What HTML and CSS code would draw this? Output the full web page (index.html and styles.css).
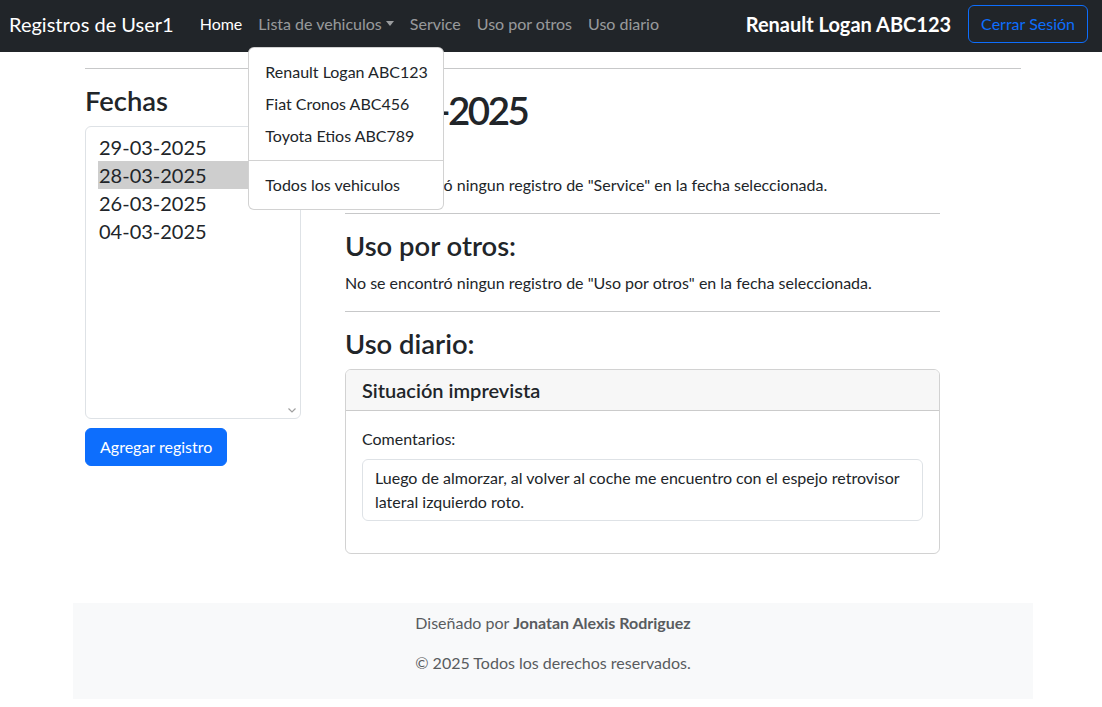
FILE: index.html
```html
<!DOCTYPE html>
<html lang="es">
<head>
<meta charset="utf-8">
<title>Registros de User1</title>
<link rel="stylesheet" href="styles.css">
</head>
<body>
<nav class="navbar">
  <div class="nav-left">
    <a class="brand" href="#">Registros de User1</a>
    <ul class="nav-links">
      <li><a class="nav-link active" href="#">Home</a></li>
      <li class="dropdown">
        <a class="nav-link dropdown-toggle" href="#">Lista de vehiculos</a>
        <ul class="dropdown-menu">
          <li><a class="dropdown-item" href="#">Renault Logan ABC123</a></li>
          <li><a class="dropdown-item" href="#">Fiat Cronos ABC456</a></li>
          <li><a class="dropdown-item" href="#">Toyota Etios ABC789</a></li>
          <li><hr class="dropdown-divider"></li>
          <li><a class="dropdown-item" href="#">Todos los vehiculos</a></li>
        </ul>
      </li>
      <li><a class="nav-link" href="#">Service</a></li>
      <li><a class="nav-link" href="#">Uso por otros</a></li>
      <li><a class="nav-link" href="#">Uso diario</a></li>
    </ul>
  </div>
  <div class="nav-right">
    <span class="current-vehicle">Renault Logan ABC123</span>
    <button class="btn-outline" type="button">Cerrar Sesión</button>
  </div>
</nav>

<main class="container">
  <hr class="rule">
  <div class="row">
    <aside class="col-left">
      <h3 class="h3">Fechas</h3>
      <div class="fechas-list">
        <div class="fecha">29-03-2025</div>
        <div class="fecha selected">28-03-2025</div>
        <div class="fecha">26-03-2025</div>
        <div class="fecha">04-03-2025</div>
        <svg class="list-chevron" width="8" height="5" viewBox="0 0 8 5"><path d="M0.5 0.5 L4 4 L7.5 0.5" fill="none" stroke="#a0a0a0" stroke-width="1.2"/></svg>
      </div>
      <button class="btn-primary" type="button">Agregar registro</button>
    </aside>
    <section class="col-right">
      <h1 class="h1">28-03-2025</h1>
      <h3 class="h3 first">Service:</h3>
      <p class="msg">No se encontró ningun registro de "Service" en la fecha seleccionada.</p>
      <hr class="rule">
      <h3 class="h3">Uso por otros:</h3>
      <p class="msg">No se encontró ningun registro de "Uso por otros" en la fecha seleccionada.</p>
      <hr class="rule">
      <h3 class="h3">Uso diario:</h3>
      <div class="card">
        <div class="card-header">Situación imprevista</div>
        <div class="card-body">
          <p class="label">Comentarios:</p>
          <div class="comment">Luego de almorzar, al volver al coche me encuentro con el espejo retrovisor lateral izquierdo roto.</div>
        </div>
      </div>
    </section>
  </div>
</main>

<footer class="footer">
  <p>Diseñado por <strong>Jonatan Alexis Rodriguez</strong></p>
  <p>© 2025 Todos los derechos reservados.</p>
</footer>
</body>
</html>
```
FILE: styles.css
```css
* { box-sizing: border-box; }

body {
  margin: 0;
  font-family: "Lato", "Liberation Sans", sans-serif;
  font-size: 16px;
  line-height: 1.5;
  color: #212529;
  background: #fff;
}

a { text-decoration: none; }

/* Navbar */
.navbar {
  height: 52px;
  background: #212529;
  display: flex;
  align-items: center;
  justify-content: space-between;
  padding: 0 14px 4px 9px;
}
.nav-left { display: flex; align-items: center; }
.brand {
  color: #fff;
  font-size: 20px;
  line-height: 30px;
  margin-right: 18px;
}
.nav-links {
  list-style: none;
  margin: 0;
  padding: 0;
  display: flex;
}
.nav-links > li { position: relative; }
.nav-link {
  display: block;
  padding: 8px;
  color: rgba(255, 255, 255, 0.55);
  line-height: 24px;
}
.nav-link.active { color: #fff; }
.dropdown-toggle::after {
  content: "";
  display: inline-block;
  margin-left: 4px;
  vertical-align: 4px;
  border-top: 5px solid;
  border-left: 4px solid transparent;
  border-right: 4px solid transparent;
}
.dropdown-menu {
  position: absolute;
  top: calc(100% + 3px);
  left: -2px;
  z-index: 10;
  list-style: none;
  margin: 0;
  padding: 8px 0;
  background: #fff;
  border: 1px solid rgba(0, 0, 0, 0.175);
  border-radius: 6px;
  min-width: 160px;
  white-space: nowrap;
}
.dropdown-item {
  display: block;
  padding: 4px 15px 4px 16px;
  color: #212529;
  line-height: 24px;
}
.dropdown-divider {
  margin: 8px 0;
  border: 0;
  border-top: 1px solid rgba(0, 0, 0, 0.175);
}

.nav-right { display: flex; align-items: center; }
.current-vehicle {
  color: #fff;
  font-size: 20px;
  font-weight: 700;
  margin-right: 17px;
}
.btn-outline {
  font-family: inherit;
  font-size: 16px;
  line-height: 24px;
  padding: 6px 12px;
  color: #0d6efd;
  background: transparent;
  border: 1px solid #0d6efd;
  border-radius: 6px;
}

/* Main */
.container {
  width: 960px;
  margin: 0 calc(50% - 482px) 0 calc(50% - 478px);
  padding: 0 12px;
}
.rule {
  margin: 16px 0;
  border: 0;
  border-top: 1px solid rgba(33, 37, 41, 0.25);
}
.row { display: flex; gap: 44px; }
.col-left { width: 216px; }
.col-right { width: 595px; }

.h3 {
  font-size: 27.4px;
  font-weight: 600;
  line-height: 1.2;
  margin: 0 0 8px;
}
.h3.first { margin-bottom: 7px; }
.h1 {
  font-size: 38.5px;
  font-weight: 600;
  line-height: 1.2;
  letter-spacing: -2.5px;
  margin: 2px 0 0;
}

.fechas-list {
  position: relative;
  height: 293px;
  border: 1px solid #dee2e6;
  border-radius: 6px;
  padding: 6px 0 0 12px;
  font-size: 20px;
}
.fecha {
  height: 28px;
  line-height: 28px;
  padding-left: 1px;
}
.fecha.selected { background: #cecece; }
.list-chevron {
  position: absolute;
  right: 4px;
  bottom: 5px;
}

.btn-primary {
  margin-top: 9px;
  font-family: inherit;
  font-size: 16px;
  line-height: 24px;
  padding: 6px 14px;
  color: #fff;
  background: #0d6efd;
  border: 1px solid #0d6efd;
  border-radius: 6px;
}

.msg { margin: 0 0 16px; }

.card {
  border: 1px solid rgba(0, 0, 0, 0.175);
  border-radius: 6px;
  overflow: hidden;
}
.card-header {
  padding: 8px 16px;
  background: #f7f7f7;
  border-bottom: 1px solid rgba(0, 0, 0, 0.175);
  font-size: 20px;
  font-weight: 600;
  line-height: 24px;
}
.card-body { padding: 16px; }
.label { margin: 0 0 8px; }
.comment {
  border: 1px solid #dee2e6;
  border-radius: 6px;
  padding: 6px 12px;
  margin-bottom: 16px;
}

/* Footer */
.footer {
  width: 960px;
  margin: 49px calc(50% - 482px) 0 calc(50% - 478px);
  padding: 8px 0;
  background: #f8f9fa;
  text-align: center;
  color: #595c5f;
}
.footer p { margin: 0 0 16px; }
.footer strong { font-weight: 700; }
```
